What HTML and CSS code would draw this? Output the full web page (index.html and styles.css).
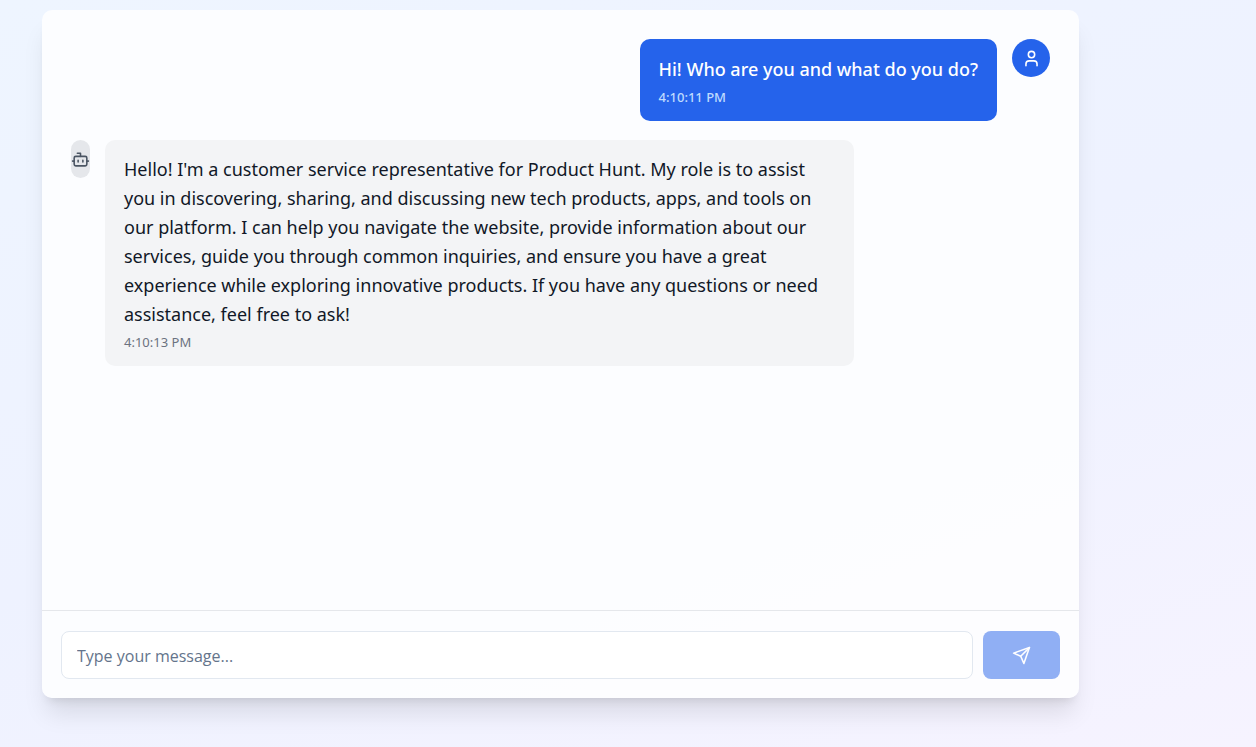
FILE: index.html
```html
<!DOCTYPE html>
<html lang="en">
<head>
    <meta charset="UTF-8">
    <meta name="viewport" content="width=device-width, initial-scale=1.0">
    <title>Chat</title>
    <link rel="stylesheet" href="styles.css">
</head>
<body>
    <main class="chat-card">
        <div class="messages">
            <div class="message message-user">
                <div class="avatar">
                    <svg viewBox="0 0 24 24" aria-hidden="true">
                        <circle cx="12" cy="7" r="4"/>
                        <path d="M19 21v-2a4 4 0 0 0-4-4H9a4 4 0 0 0-4 4v2"/>
                    </svg>
                </div>
                <div class="bubble">
                    <p class="text">Hi! Who are you and what do you do?</p>
                    <time class="time">4:10:11 PM</time>
                </div>
            </div>

            <div class="message message-bot">
                <div class="avatar">
                    <svg viewBox="0 0 24 24" aria-hidden="true">
                        <path d="M12 8V4H8"/>
                        <rect width="16" height="12" x="4" y="8" rx="2"/>
                        <path d="M2 14h2M20 14h2M15 13v2M9 13v2"/>
                    </svg>
                </div>
                <div class="bubble">
                    <p class="text">Hello! I'm a customer service representative for Product Hunt. My role is to assist you in discovering, sharing, and discussing new tech products, apps, and tools on our platform. I can help you navigate the website, provide information about our services, guide you through common inquiries, and ensure you have a great experience while exploring innovative products. If you have any questions or need assistance, feel free to ask!</p>
                    <time class="time">4:10:13 PM</time>
                </div>
            </div>
        </div>

        <form class="composer">
            <input class="composer-input" type="text" placeholder="Type your message..." aria-label="Message">
            <button class="send-btn" type="submit" aria-label="Send" disabled>
                <svg viewBox="0 0 24 24" aria-hidden="true">
                    <path d="m22 2-7 20-4-9-9-4Z"/>
                    <path d="M22 2 11 13"/>
                </svg>
            </button>
        </form>
    </main>
</body>
</html>
```
FILE: styles.css
```css
* {
    margin: 0;
    padding: 0;
    box-sizing: border-box;
}

body {
    font-family: "Noto Sans", "Open Sans", sans-serif;
    background: linear-gradient(160deg, #eef5ff 0%, #eef2ff 50%, #f6f3ff 100%);
    min-height: 100vh;
    padding: 10px 177px 48px 42px;
    color: #111827;
}

svg {
    fill: none;
    stroke: currentColor;
    stroke-width: 2;
    stroke-linecap: round;
    stroke-linejoin: round;
}

.chat-card {
    background: rgba(255, 255, 255, 0.8);
    border-radius: 10px;
    box-shadow: 0 20px 25px -5px rgba(0, 0, 0, 0.1), 0 8px 10px -6px rgba(0, 0, 0, 0.1);
}

.messages {
    display: flex;
    flex-direction: column;
    gap: 19px;
    min-height: 600px;
    padding: 29px;
}

.message {
    display: flex;
    align-items: flex-start;
    gap: 15px;
    max-width: 80%;
}

.message-user {
    flex-direction: row-reverse;
    align-self: flex-end;
}

.avatar {
    display: flex;
    align-items: center;
    justify-content: center;
    flex-shrink: 0;
    width: 38px;
    height: 38px;
    border-radius: 20px;
}

.avatar svg {
    width: 19px;
    height: 19px;
}

.message-user .avatar {
    background: #2563eb;
    color: #fff;
}

.message-bot .avatar {
    width: 19px;
    background: #e5e7eb;
    color: #4b5563;
}

.bubble {
    padding: 15px 19px;
    border-radius: 10px;
}

.message-user .bubble {
    padding-top: 16px;
    background: #2563eb;
    color: #fff;
    font-weight: 500;
}

.message-bot .bubble {
    background: #f3f4f6;
}

.text {
    font-size: 18px;
    line-height: 29px;
}

.time {
    display: block;
    margin-top: 4px;
    font-size: 13px;
    line-height: 18px;
    color: #6b7280;
}

.message-user .time {
    color: #bfdbfe;
}

.composer {
    display: flex;
    gap: 10px;
    padding: 20px 19px 19px;
    border-top: 1px solid #e5e7eb;
}

.composer-input {
    flex: 1;
    min-width: 0;
    height: 48px;
    padding: 2px 15px 0;
    border: 1px solid #e2e8f0;
    border-radius: 8px;
    background: #fff;
    font-family: "Open Sans", "Noto Sans", sans-serif;
    font-size: 16px;
    color: inherit;
}

.composer-input::placeholder {
    color: #64748b;
}

.send-btn {
    display: flex;
    align-items: center;
    justify-content: center;
    width: 77px;
    height: 48px;
    border: none;
    border-radius: 8px;
    background: #2563eb;
    color: #fff;
}

.send-btn:disabled {
    opacity: 0.5;
}

.send-btn svg {
    width: 19px;
    height: 19px;
}
```
